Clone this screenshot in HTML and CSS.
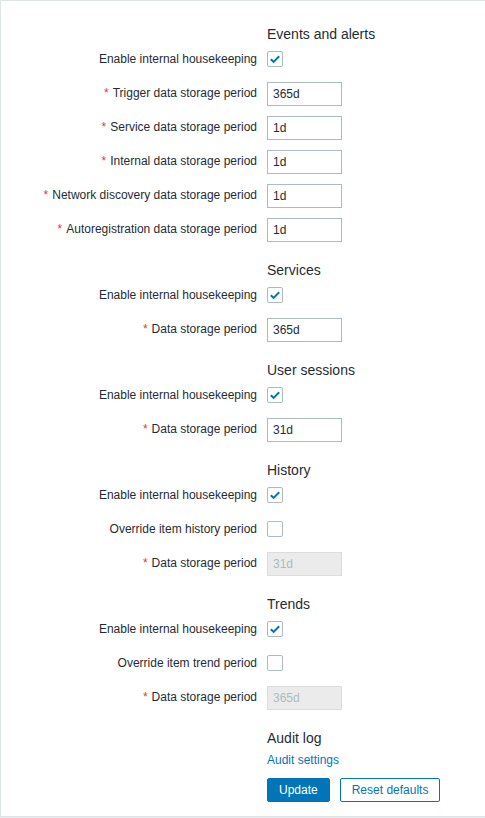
FILE: index.html
```html
<!DOCTYPE html>
<html>
<head>
<meta charset="utf-8">
<link rel="stylesheet" href="styles.css">
</head>
<body>
<div class="box">
  <form class="form">
    <div class="heading-row"><div></div><h4 class="heading">Events and alerts</h4></div>
    <div class="row"><label class="label">Enable internal housekeeping</label><div class="ctrl"><span class="cb checked"><svg viewBox="0 0 16 16" width="16" height="16"><path d="M3.8 8.2 L6.6 10.9 L12.2 5.3" fill="none" stroke="#0275b8" stroke-width="2"/></svg></span></div></div>
    <div class="row"><label class="label"><span class="req">*</span>Trigger data storage period</label><div class="ctrl"><input class="inp" type="text" value="365d"></div></div>
    <div class="row"><label class="label"><span class="req">*</span>Service data storage period</label><div class="ctrl"><input class="inp" type="text" value="1d"></div></div>
    <div class="row"><label class="label"><span class="req">*</span>Internal data storage period</label><div class="ctrl"><input class="inp" type="text" value="1d"></div></div>
    <div class="row"><label class="label"><span class="req">*</span>Network discovery data storage period</label><div class="ctrl"><input class="inp" type="text" value="1d"></div></div>
    <div class="row"><label class="label"><span class="req">*</span>Autoregistration data storage period</label><div class="ctrl"><input class="inp" type="text" value="1d"></div></div>

    <div class="heading-row"><div></div><h4 class="heading">Services</h4></div>
    <div class="row"><label class="label">Enable internal housekeeping</label><div class="ctrl"><span class="cb checked"><svg viewBox="0 0 16 16" width="16" height="16"><path d="M3.8 8.2 L6.6 10.9 L12.2 5.3" fill="none" stroke="#0275b8" stroke-width="2"/></svg></span></div></div>
    <div class="row"><label class="label"><span class="req">*</span>Data storage period</label><div class="ctrl"><input class="inp" type="text" value="365d"></div></div>

    <div class="heading-row"><div></div><h4 class="heading">User sessions</h4></div>
    <div class="row"><label class="label">Enable internal housekeeping</label><div class="ctrl"><span class="cb checked"><svg viewBox="0 0 16 16" width="16" height="16"><path d="M3.8 8.2 L6.6 10.9 L12.2 5.3" fill="none" stroke="#0275b8" stroke-width="2"/></svg></span></div></div>
    <div class="row"><label class="label"><span class="req">*</span>Data storage period</label><div class="ctrl"><input class="inp" type="text" value="31d"></div></div>

    <div class="heading-row"><div></div><h4 class="heading">History</h4></div>
    <div class="row"><label class="label">Enable internal housekeeping</label><div class="ctrl"><span class="cb checked"><svg viewBox="0 0 16 16" width="16" height="16"><path d="M3.8 8.2 L6.6 10.9 L12.2 5.3" fill="none" stroke="#0275b8" stroke-width="2"/></svg></span></div></div>
    <div class="row"><label class="label">Override item history period</label><div class="ctrl"><span class="cb"></span></div></div>
    <div class="row"><label class="label"><span class="req">*</span>Data storage period</label><div class="ctrl"><input class="inp" type="text" value="31d" disabled></div></div>

    <div class="heading-row"><div></div><h4 class="heading">Trends</h4></div>
    <div class="row"><label class="label">Enable internal housekeeping</label><div class="ctrl"><span class="cb checked"><svg viewBox="0 0 16 16" width="16" height="16"><path d="M3.8 8.2 L6.6 10.9 L12.2 5.3" fill="none" stroke="#0275b8" stroke-width="2"/></svg></span></div></div>
    <div class="row"><label class="label">Override item trend period</label><div class="ctrl"><span class="cb"></span></div></div>
    <div class="row"><label class="label"><span class="req">*</span>Data storage period</label><div class="ctrl"><input class="inp" type="text" value="365d" disabled></div></div>

    <div class="heading-row"><div></div><h4 class="heading">Audit log</h4></div>
    <div class="link-row"><div></div><a class="link" href="#">Audit settings</a></div>
    <div class="btn-row"><div></div><div class="btns"><button class="btn primary" type="button">Update</button><button class="btn secondary" type="button">Reset defaults</button></div></div>
  </form>
</div>
</body>
</html>
```

FILE: styles.css
```css
html, body {
  margin: 0;
  padding: 0;
  background: #ebeef0;
}
body {
  font-family: Arial, "Liberation Sans", sans-serif;
  font-size: 12px;
  color: #1f2c33;
}
.box {
  background: #ffffff;
  border: 1px solid #dfe4e7;
  border-right: none;
  padding: 24px 0 13px 0;
  height: 778px;
}
.form {
  display: flex;
  flex-direction: column;
}
.heading-row, .row, .link-row, .btn-row {
  display: grid;
  grid-template-columns: 256px 1fr;
  column-gap: 10px;
}
.heading-row {
  margin-bottom: 5px;
}
.row + .heading-row {
  margin-top: 9px;
}
.heading {
  margin: 0;
  font-size: 14px;
  font-weight: normal;
  line-height: 18px;
  color: #1f2c33;
}
.row {
  padding-bottom: 10px;
  align-items: start;
}
.label {
  text-align: right;
  line-height: 23px;
  white-space: nowrap;
}
.req {
  color: #e33734;
  margin-right: 4px;
}
.ctrl {
  display: flex;
  align-items: flex-start;
  height: 24px;
}
.cb {
  box-sizing: border-box;
  width: 16px;
  height: 16px;
  margin-top: 3px;
  border: 1px solid #acbbc2;
  border-radius: 2px;
  background: #fff;
  position: relative;
  display: block;
}
.cb svg {
  position: absolute;
  left: -1px;
  top: -1px;
}
.inp {
  box-sizing: border-box;
  width: 75px;
  height: 24px;
  margin: 0;
  border: 1px solid #acbbc2;
  border-radius: 0;
  padding: 0 5px;
  font-family: Arial, "Liberation Sans", sans-serif;
  font-size: 12px;
  color: #1f2c33;
  background: #fff;
  outline: none;
}
.inp:disabled {
  background: #ebebeb;
  color: #acbbc2;
  border-color: #dcdcdc;
}
.link-row {
  line-height: 14px;
  padding-top: 1px;
}
.link {
  color: #0275b8;
  text-decoration: none;
}
.btn-row {
  margin-top: 11px;
}
.btns {
  display: flex;
  gap: 10px;
}
.btn {
  box-sizing: border-box;
  height: 24px;
  padding: 0 11px;
  margin: 0;
  border: 1px solid #0275b8;
  border-radius: 2px;
  font-family: Arial, "Liberation Sans", sans-serif;
  font-size: 12px;
  line-height: 22px;
  cursor: pointer;
}
.btn.primary {
  background: #0275b8;
  color: #ffffff;
}
.btn.secondary {
  background: #ffffff;
  color: #0275b8;
}
```
